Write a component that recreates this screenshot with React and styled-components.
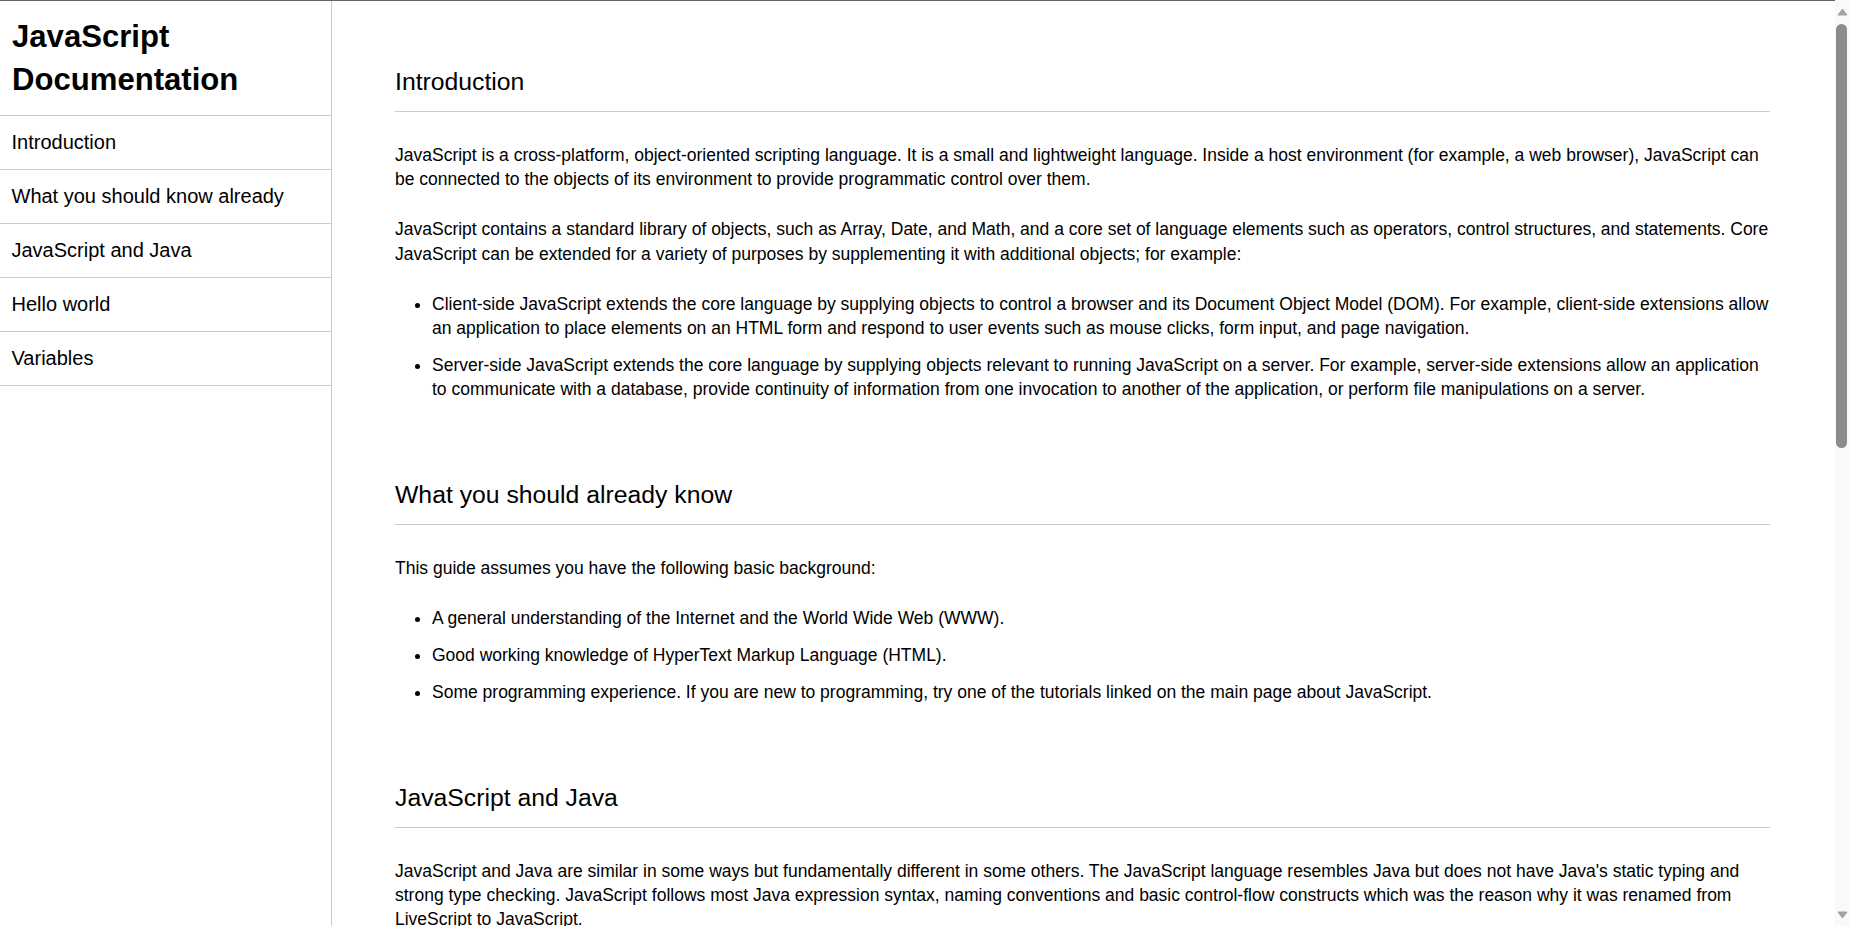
import React from "react";
import styled, { createGlobalStyle } from "styled-components";

const GlobalStyle = createGlobalStyle`
  html, body {
    margin: 0;
    padding: 0;
    background: #ffffff;
  }
  body {
    font-family: "Liberation Sans", Arial, sans-serif;
    color: #000000;
  }
  * { box-sizing: border-box; }
`;

const Frame = styled.div`
  display: flex;
  align-items: flex-start;
`;

const Page = styled.div`
  flex: 1;
  min-width: 0;
  display: flex;
  align-items: flex-start;
  border-top: 1px solid #646464;
  min-height: 100vh;
`;

/* Browser-style vertical scrollbar drawn beside the page */
const ScrollTrack = styled.div`
  position: sticky;
  top: 0;
  flex: 0 0 15px;
  height: 100vh;
  background: #f9f9f9;
  display: flex;
  flex-direction: column;
  align-items: stretch;
`;

const ScrollButton = styled.div`
  height: 17px;
  display: flex;
  align-items: ${(p) => (p.$down ? "flex-start" : "flex-end")};
  justify-content: center;
  padding: ${(p) => (p.$down ? "2px 0 0" : "0 0 1px")};
`;

const ScrollThumb = styled.div`
  margin: 7px 3px 0 1px;
  height: 424px;
  background: #8c8c8c;
  border-radius: 6px;
`;

const ScrollSpacer = styled.div`
  flex: 1;
`;

const Sidebar = styled.nav`
  position: sticky;
  top: 0;
  flex: 0 0 332px;
  height: calc(100vh - 1px);
  border-right: 1px solid #c8c8c8;
  display: flex;
  flex-direction: column;
`;

const Title = styled.header`
  margin: 0;
  padding: 14.25px 12px 13.75px 12px;
  font-size: 31.1px;
  line-height: 43px;
  font-weight: 700;
`;

const NavList = styled.ul`
  list-style: none;
  margin: 0;
  padding: 0;
  border-bottom: 1px solid #cccccc;
`;

const NavItem = styled.li`
  border-top: 1px solid #cccccc;
`;

const NavLink = styled.a`
  display: block;
  padding: 12px 12px 13px 11.5px;
  font-size: 20px;
  line-height: 28px;
  color: #000000;
  text-decoration: none;
`;

const Main = styled.main`
  flex: 1;
  min-width: 0;
  padding: 66px 65px 60px 63px;
  display: flex;
  flex-direction: column;
  gap: 78.5px;
`;

const Section = styled.section`
  display: flex;
  flex-direction: column;
`;

const SectionHeader = styled.header`
  margin: 0;
  padding-bottom: 14px;
  border-bottom: 1px solid #cccccc;
  font-size: 24.75px;
  line-height: 30px;
  font-weight: 400;
`;

const Article = styled.article`
  padding-top: 31px;
  display: flex;
  flex-direction: column;
  gap: 25.5px;
  font-size: 17.5px;
  line-height: 24.4px;
`;

const Para = styled.p`
  margin: 0;
`;

const List = styled.ul`
  margin: 0;
  padding-left: 37px;
  display: flex;
  flex-direction: column;
  gap: 12.4px;
`;

const Item = styled.li`
  list-style: disc;
`;

const Code = styled.pre`
  margin: 0;
  padding: 14px 18px;
  background: #f4f4f4;
  border-radius: 4px;
  font-family: "Liberation Mono", "Courier New", monospace;
  font-size: 15px;
  line-height: 1.45;
  white-space: pre-wrap;
`;

const navItems = [
  "Introduction",
  "What you should know already",
  "JavaScript and Java",
  "Hello world",
  "Variables",
];

const sections = [
  {
    id: "Introduction",
    title: "Introduction",
    blocks: [
      {
        type: "p",
        text: "JavaScript is a cross-platform, object-oriented scripting language. It is a small and lightweight language. Inside a host environment (for example, a web browser), JavaScript can be connected to the objects of its environment to provide programmatic control over them.",
      },
      {
        type: "p",
        text: "JavaScript contains a standard library of objects, such as Array, Date, and Math, and a core set of language elements such as operators, control structures, and statements. Core JavaScript can be extended for a variety of purposes by supplementing it with additional objects; for example:",
      },
      {
        type: "ul",
        items: [
          "Client-side JavaScript extends the core language by supplying objects to control a browser and its Document Object Model (DOM). For example, client-side extensions allow an application to place elements on an HTML form and respond to user events such as mouse clicks, form input, and page navigation.",
          "Server-side JavaScript extends the core language by supplying objects relevant to running JavaScript on a server. For example, server-side extensions allow an application to communicate with a database, provide continuity of information from one invocation to another of the application, or perform file manipulations on a server.",
        ],
      },
    ],
  },
  {
    id: "What_you_should_know_already",
    title: "What you should already know",
    blocks: [
      { type: "p", text: "This guide assumes you have the following basic background:" },
      {
        type: "ul",
        items: [
          "A general understanding of the Internet and the World Wide Web (WWW).",
          "Good working knowledge of HyperText Markup Language (HTML).",
          "Some programming experience. If you are new to programming, try one of the tutorials linked on the main page about JavaScript.",
        ],
      },
    ],
  },
  {
    id: "JavaScript_and_Java",
    title: "JavaScript and Java",
    blocks: [
      {
        type: "p",
        text: "JavaScript and Java are similar in some ways but fundamentally different in some others. The JavaScript language resembles Java but does not have Java's static typing and strong type checking. JavaScript follows most Java expression syntax, naming conventions and basic control-flow constructs which was the reason why it was renamed from LiveScript to JavaScript.",
      },
      {
        type: "p",
        text: "In contrast to Java's compile-time system of classes built by declarations, JavaScript supports a runtime system based on a small number of data types representing numeric, Boolean, and string values. JavaScript has a prototype-based object model instead of the more common class-based object model. The prototype-based model provides dynamic inheritance; that is, what is inherited can vary for individual objects. JavaScript also supports functions without any special declarative requirements. Functions can be properties of objects, executing as loosely typed methods.",
      },
    ],
  },
  {
    id: "Hello_world",
    title: "Hello world",
    blocks: [
      {
        type: "p",
        text: "To get started with writing JavaScript, open the Scratchpad and write your first \"Hello world\" JavaScript code:",
      },
      {
        type: "code",
        text: 'function greetMe(yourName) { alert("Hello " + yourName); }\ngreetMe("World");',
      },
      {
        type: "p",
        text: "Select the code in the pad and hit Ctrl+R to watch it unfold in your browser!",
      },
    ],
  },
  {
    id: "Variables",
    title: "Variables",
    blocks: [
      {
        type: "p",
        text: "You use variables as symbolic names for values in your application. The names of variables, called identifiers, conform to certain rules.",
      },
      {
        type: "p",
        text: "A JavaScript identifier must start with a letter, underscore (_), or dollar sign ($); subsequent characters can also be digits (0-9). Because JavaScript is case sensitive, letters include the characters \"A\" through \"Z\" (uppercase) and the characters \"a\" through \"z\" (lowercase).",
      },
    ],
  },
];

function Block({ block }) {
  if (block.type === "p") return <Para>{block.text}</Para>;
  if (block.type === "code") return <Code>{block.text}</Code>;
  return (
    <List>
      {block.items.map((t) => (
        <Item key={t}>{t}</Item>
      ))}
    </List>
  );
}

function Arrow({ down }) {
  return (
    <svg width="11" height="8" viewBox="0 0 11 8" aria-hidden="true">
      <polygon
        points={down ? "1,1 10,1 5.5,7" : "1,7 10,7 5.5,1"}
        fill="#a3a3a3"
        stroke="#a3a3a3"
        strokeWidth="1"
        strokeLinejoin="round"
      />
    </svg>
  );
}

export default function App() {
  return (
    <>
      <GlobalStyle />
      <Frame>
        <Page>
          <Sidebar id="navbar">
            <Title>JavaScript Documentation</Title>
            <NavList>
              {navItems.map((n) => (
                <NavItem key={n}>
                  <NavLink href={"#" + n.replace(/ /g, "_")}>{n}</NavLink>
                </NavItem>
              ))}
            </NavList>
          </Sidebar>
          <Main id="main-doc">
            {sections.map((s) => (
              <Section key={s.id} id={s.id} className="main-section">
                <SectionHeader>{s.title}</SectionHeader>
                <Article>
                  {s.blocks.map((b, i) => (
                    <Block key={i} block={b} />
                  ))}
                </Article>
              </Section>
            ))}
          </Main>
        </Page>
        <ScrollTrack aria-hidden="true">
          <ScrollButton>
            <Arrow />
          </ScrollButton>
          <ScrollThumb />
          <ScrollSpacer />
          <ScrollButton $down>
            <Arrow down />
          </ScrollButton>
        </ScrollTrack>
      </Frame>
    </>
  );
}
